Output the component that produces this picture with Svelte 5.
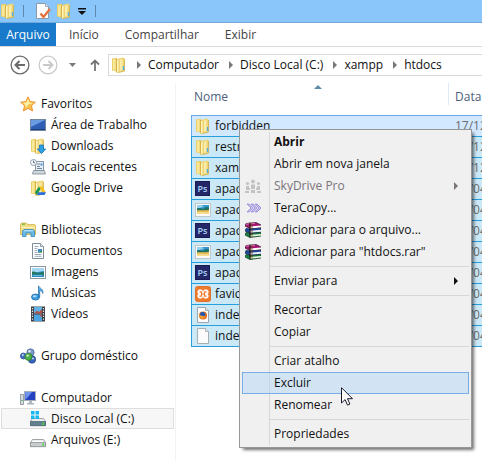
<script>
  const tabs = ['Início', 'Compartilhar', 'Exibir'];
  const crumbs = ['Computador', 'Disco Local (C:)', 'xampp', 'htdocs'];
  const groups = [
    {
      label: 'Favoritos', icon: 'star',
      items: [
        { label: 'Área de Trabalho', icon: 'desktop' },
        { label: 'Downloads', icon: 'downloads' },
        { label: 'Locais recentes', icon: 'recent' },
        { label: 'Google Drive', icon: 'gdrive' }
      ]
    },
    {
      label: 'Bibliotecas', icon: 'library',
      items: [
        { label: 'Documentos', icon: 'document' },
        { label: 'Imagens', icon: 'picture' },
        { label: 'Músicas', icon: 'music' },
        { label: 'Vídeos', icon: 'video' }
      ]
    },
    { label: 'Grupo doméstico', icon: 'homegroup', items: [] },
    {
      label: 'Computador', icon: 'computer',
      items: [
        { label: 'Disco Local (C:)', icon: 'driveC', selected: true },
        { label: 'Arquivos (E:)', icon: 'drive' }
      ]
    }
  ];
  const files = [
    { name: 'forbidden', icon: 'folder', date: '17/12' },
    { name: 'restricted', icon: 'folder', date: '17/12' },
    { name: 'xampp', icon: 'folder', date: '17/12' },
    { name: 'apache_pb.gif', icon: 'ps', date: '17/04' },
    { name: 'apache_pb.png', icon: 'photo', date: '17/04' },
    { name: 'apache_pb2.gif', icon: 'ps', date: '17/04' },
    { name: 'apache_pb2.png', icon: 'photo', date: '17/04' },
    { name: 'apache_pb2_ani.gif', icon: 'ps', date: '17/04' },
    { name: 'favicon.ico', icon: 'xampp', date: '17/04' },
    { name: 'index.html', icon: 'firefox', date: '17/04' },
    { name: 'index.php', icon: 'blank', date: '17/04' }
  ];
  const menu = [
    [
      { label: 'Abrir', bold: true },
      { label: 'Abrir em nova janela' },
      { label: 'SkyDrive Pro', icon: 'skydrive', disabled: true, sub: true },
      { label: 'TeraCopy...', icon: 'teracopy' },
      { label: 'Adicionar para o arquivo...', icon: 'rar' },
      { label: 'Adicionar para "htdocs.rar"', icon: 'rar' }
    ],
    [{ label: 'Enviar para', sub: true }],
    [{ label: 'Recortar' }, { label: 'Copiar' }],
    [{ label: 'Criar atalho' }, { label: 'Excluir', active: true }, { label: 'Renomear' }],
    [{ label: 'Propriedades' }]
  ];
</script>

{#snippet folderShape()}
  <path d="M1 1.500L6 .8v13.700L1 13.500z" fill="#eccf66" />
  <path d="M2 2.500l2.500-.5v11.500L2 13z" fill="#f8e89c" />
  <path d="M5 2h3v12.500L6.500 16 5 15z" fill="#d9b345" />
  <path d="M6 3l2-1v12.500l-2 1z" fill="#fdf3bd" />
  <path d="M7.500 1.500l5-1 1 1v12.300l-6 1.700z" fill="#efd473" />
  <path d="M9 2.500l2.500-.5v11L9 14z" fill="#f9ebaa" />
  <path d="M13.500 2v12l-6 1.500" fill="none" stroke="#d2ac42" stroke-width=".8" />
  <path d="M12.500 9v4" stroke="#56aee0" stroke-width="1.400" />
{/snippet}

{#snippet icon(name)}
  <svg class="icon" viewBox="0 0 16 16" width="16" height="16" aria-hidden="true">
    {#if name === 'folder'}
      {@render folderShape()}
    {:else if name === 'star'}
      <path d="M8 .8l2.200 4.800 5.200.6-3.900 3.500 1.100 5.300L8 12.400 3.400 15l1.100-5.300L.6 6.200l5.200-.6z" fill="#fbc04b" stroke="#e98f2c" stroke-width=".9" />
      <path d="M8 2.800l1.500 3.700 3.800.5-4.800 1.400-3.200 4 .5-3.100L2.600 7l3.700-.5z" fill="#fff0a8" />
    {:else if name === 'desktop'}
      <rect x=".5" y="2.500" width="15" height="11" fill="#2e5fb5" stroke="#71879f" />
      <path d="M1 3h14L1 10z" fill="#6b9be0" />
      <path d="M1 12.500h14" stroke="#1f3f7a" />
    {:else if name === 'downloads'}
      {@render folderShape()}
      <path d="M9.500 7h4v4h2.200L11.500 15.600 7.300 11h2.200z" fill="#2f9fe3" stroke="#1673b4" stroke-width=".8" />
    {:else if name === 'recent'}
      <rect x="5.500" y="2.500" width="8" height="9" fill="#e7edf3" stroke="#8797a8" />
      <path d="M7 5h3M7 7.500h3M7 9.500h5" stroke="#72869b" />
      <rect x="10.500" y="4.500" width="2" height="2" fill="#4398d8" />
      <path d="M3.500 11.500h11l1 3.500h-13z" fill="#ced6dd" stroke="#7d8994" stroke-width=".8" />
      <circle cx="3.500" cy="3.500" r="3" fill="#f6f8fa" stroke="#8797a8" stroke-width=".9" />
      <path d="M3.500 1.700v2h1.500" stroke="#44566b" stroke-width=".8" fill="none" />
    {:else if name === 'gdrive'}
      {@render folderShape()}
      <path d="M9 6.500h3l4 6h-3.200z" fill="#fbc118" />
      <path d="M9 6.500l1.600 2.600L6.700 15 5 12.300z" fill="#159a50" />
      <path d="M8.300 12.300H16L14.500 15H6.700z" fill="#2c6edb" />
    {:else if name === 'library'}
      <path d="M.5 3l1-2h5l1 1.500h7l1 1v9H.5z" fill="#f4dc82" stroke="#d3b04d" stroke-width=".8" />
      <path d="M2 2.200h3" stroke="#5bbd45" stroke-width="1.200" />
      <path d="M1 5.500h14" stroke="#fff5c4" />
      <path d="M2.500 14.500V9l1.500-1.500h9L14.500 9v5.500H11V11H6v3.500z" fill="#69b9e8" stroke="#3486ba" stroke-width=".8" />
      <path d="M4 8.700h9" stroke="#c2e8fb" />
    {:else if name === 'document'}
      <path d="M2.500.5h8l3 3v12h-11z" fill="#fff" stroke="#7e8a96" />
      <path d="M10.500.5v3h3" fill="#dce3ea" stroke="#7e8a96" stroke-width=".8" />
      <path d="M4.500 3.500h4M4.500 5.500h3M4.500 7.500h3M4.500 9.500h3M4.500 11.500h7M4.500 13.300h7" stroke="#8fa3b7" stroke-width=".9" />
      <rect x="8" y="6" width="4" height="3.500" fill="#3a8ac7" /><path d="M8 9.500l4-2v2z" fill="#3f9346" />
    {:else if name === 'picture'}
      <rect x=".5" y="2.500" width="15" height="12" fill="#fff" stroke="#8b969f" />
      <rect x="2" y="4" width="12" height="9" fill="#2a8ac0" />
      <path d="M2 4h12v3L2 9z" fill="#a4d8f5" />
      <path d="M2 8c2.500-1.500 4 1 6 1s4-1.500 6-1v2.500H2z" fill="#24765c" />
      <path d="M3 11.500h9" stroke="#7cc4e6" stroke-width=".8" />
    {:else if name === 'music'}
      <ellipse cx="5.500" cy="12" rx="4" ry="3" fill="#3d9de0" stroke="#1e6ba8" stroke-width=".8" />
      <path d="M8.500 12V.8c1 2.700 5.500 3.200 4.200 7.700 0-1.900-1-2.800-3-3V12z" fill="#56b2ec" stroke="#1e6ba8" stroke-width=".7" />
      <ellipse cx="4.700" cy="11.300" rx="2" ry="1" fill="#a9dbf9" />
    {:else if name === 'video'}
      <rect x="1" y=".5" width="14" height="15" fill="#3a3f45" />
      <rect x="4" y="1" width="8" height="6.500" fill="#61b3e8" /><rect x="4" y="8.500" width="8" height="6.500" fill="#49a4e2" />
      <path d="M4 7.500l3-3 2 1.500 3-3v4.500zM9 8.500h3v3z" fill="#b55243" />
      <path d="M2.500 2v13M13.500 2v13" stroke="#e4e8eb" stroke-width="1.200" stroke-dasharray="1.300 1.300" />
    {:else if name === 'homegroup'}
      <circle cx="10.500" cy="4.500" r="3.700" fill="#7c98c8" stroke="#455f98" stroke-width=".7" />
      <circle cx="3.400" cy="8" r="3" fill="#406fc0" stroke="#294c8e" stroke-width=".7" />
      <circle cx="12" cy="11.500" r="3.700" fill="#3564bd" stroke="#203f86" stroke-width=".7" />
      <circle cx="8.500" cy="8.800" r="3.600" fill="#4fae43" stroke="#2a7d2b" stroke-width=".7" />
      <g fill="#fff" opacity=".75"><circle cx="9.500" cy="3.300" r="1.200" /><circle cx="2.800" cy="7" r="1" /><circle cx="7.600" cy="7.600" r="1.200" /><circle cx="13" cy="10.500" r="1" /></g>
    {:else if name === 'computer'}
      <rect x=".5" y="4.500" width="3" height="10" fill="#d5dadf" stroke="#868f98" stroke-width=".8" />
      <path d="M1.300 10.500h1.400" stroke="#45b83c" />
      <rect x="4.500" y="1.500" width="11" height="9" fill="#2341c0" stroke="#a7b0ba" />
      <path d="M5 2h7L5.500 10z" fill="#6f95ee" />
      <path d="M9 11h3v2h2v1.500H7V13h2z" fill="#aeb6be" />
    {:else if name === 'driveC' || name === 'drive'}
      <path d="M2.500 7.500h11l2 3v4H.5v-4z" fill="#eceeef" stroke="#8b9095" stroke-width=".8" />
      {#if name === 'driveC'}
        <path d="M.5 10.500h15v4.200H.5z" fill="#61818f" stroke="#47606c" stroke-width=".7" />
        <path d="M1 0h3.500v3.500H1zM5.500 0H9v3.500H5.500zM1 4.500h3.500V8H1zM5.500 4.500H9V8H5.500z" fill="#17b7ef" />
      {:else}
        <path d="M.5 10.500h15v4.200H.5z" fill="#c9cccf" stroke="#85898d" stroke-width=".7" />
        <path d="M2 9.500h11" stroke="#fff" />
      {/if}
      <rect x="12.500" y="11.500" width="1.500" height="2.500" fill="#46dd38" />
    {:else if name === 'ps'}
      <rect x=".5" y=".5" width="14" height="14" fill="#232768" stroke="#1a1c55" />
      <text x="2.500" y="10.500" font-size="9" font-weight="600" fill="#a9d3fa">Ps</text>
    {:else if name === 'photo'}
      <rect x=".5" y="1.500" width="15" height="13" fill="#fbfaf6" stroke="#b9bcbc" stroke-width=".8" />
      <rect x="2" y="3" width="12" height="9" fill="#2f97cf" />
      <path d="M2 3h5l2 1.500L5 6H2z" fill="#8fd0ef" />
      <path d="M2 6.500l3-.5 3 1 3-2 3 .5v3H2z" fill="#23705f" />
      <path d="M2 8.500c3-1 8 .5 12-.7V12H2z" fill="#e9bc4c" />
      <path d="M2 10.500c4-1 8 0 12-.5v2H2z" fill="#f6dc90" />
    {:else if name === 'xampp'}
      <rect x=".5" y=".5" width="15" height="15" rx="2" fill="#ee7a2b" stroke="#dc6518" stroke-width=".8" />
      <path d="M4 3.500h2.500L8 5l1.500-1.500H12l1.500 1.500v2L12.500 8l1 1v2L12 12.500H9.500L8 11l-1.500 1.500H4L2.500 11V9l1-1-1-1V5z" fill="#fff" />
      <path d="M4.500 5.800h2v2.200h3V5.800h2M4.500 10.200h2V8M9.500 8v2.200h2" fill="none" stroke="#ee7a2b" stroke-width="1.200" />
    {:else if name === 'firefox'}
      <path d="M2.500.5h8l3 3v12h-11z" fill="#fbfbfb" stroke="#979da1" stroke-width=".9" />
      <path d="M10.500.5v3h3" fill="#e6e9eb" stroke="#979da1" stroke-width=".8" />
      <circle cx="8" cy="8.500" r="4" fill="#e46d20" /><circle cx="7.600" cy="7.600" r="2.700" fill="#2756ae" />
      <path d="M4 6.500c.5 2 2 2 3 2.300s2 .6 3-.3c0 2-1.500 3.300-3 3.200S4 9.500 4 6.500z" fill="#f29b2d" />
    {:else if name === 'blank'}
      <path d="M2.500.5h8l3 3v12h-11z" fill="#fbfbfb" stroke="#a2a7aa" stroke-width=".9" />
      <path d="M10.500.5v3h3" fill="#e9ecee" stroke="#a2a7aa" stroke-width=".8" />
    {:else if name === 'skydrive'}
      <g fill="#c3c3c3">
        <circle cx="8" cy="3.500" r="2" /><circle cx="2.500" cy="5.500" r="1.600" /><circle cx="13.500" cy="5.500" r="1.600" />
        <path d="M6 6.500h4V11H6zM1 8h3v2h1v2H1zM12 8h3v4h-4v-2h1z" />
        <path d="M0 13h4v2H0zM6 12h4v3H6zM12 13h4v2h-4z" />
      </g>
    {:else if name === 'teracopy'}
      <path d="M2 4h2.200l4 4-4 4H2l4-4zM6 4h2.200l4 4-4 4H6l4-4zM10 4h2.200l4 4-4 4H10l4-4z" fill="#c5bdf2" stroke="#8d80d6" stroke-width=".7" />
    {:else if name === 'rar'}
      <path d="M1 1.500L11 .5l5 2.500v2.500L5 6.500 0 4z" fill="#a51773" stroke="#2b1023" stroke-width=".7" />
      <path d="M5 4.500l11-1v2l-11 1z" fill="#fff" /><path d="M1 2.200l9-1" stroke="#eb79c8" />
      <path d="M1 6.500L5 7l11-1v4l-11 1.500-5-2.500z" fill="#1c49a8" stroke="#111c40" stroke-width=".7" />
      <path d="M5 8.700l11-1v2l-11 1z" fill="#e9eef8" />
      <path d="M1 10.500l4 1.200 11-1.200v3.500L5 15.500 0 13z" fill="#168a43" stroke="#0b3018" stroke-width=".7" />
      <path d="M5 13l11-1v1.500L5 14.700z" fill="#effae9" />
      <path d="M5 .8v14.500" stroke="#251811" stroke-width="1.300" /><path d="M7 .8v14.200" stroke="#7a4a22" stroke-width=".8" />
    {:else if name === 'properties'}
      <path d="M1.500.5h9l3 3v12h-12z" fill="#fdfdfd" stroke="#8c9aa8" />
      <path d="M10.500.5v3h3" fill="#dfe6ec" stroke="#8c9aa8" stroke-width=".8" />
      <path d="M5.500 10.500l3 3.500L15 6" fill="none" stroke="#e5713d" stroke-width="2.400" />
    {/if}
  </svg>
{/snippet}

{#snippet arrow()}
  <svg class="arrow" viewBox="0 0 4 8" width="4" height="8" aria-hidden="true"><path d="M0 0l4 4-4 4z" fill="currentColor" /></svg>
{/snippet}

<div class="window">
  <header class="title">
    {@render icon('folder')}
    <span class="bar"></span>
    <button class="plain" aria-label="Propriedades">{@render icon('properties')}</button>
    <button class="plain" aria-label="Nova pasta">{@render icon('folder')}</button>
    <button class="plain" aria-label="Personalizar">
      <svg viewBox="0 0 8 7" width="8" height="7"><path d="M0 0h8v1.500H0zM0 3h8L4 7z" fill="#111" /></svg>
    </button>
    <span class="bar"></span>
  </header>

  <div class="tabs">
    <button class="tab file">Arquivo</button>
    {#each tabs as tab}<button class="tab">{tab}</button>{/each}
  </div>

  <div class="nav">
    <button class="plain" aria-label="Voltar">
      <svg viewBox="0 0 20 20" width="20" height="20" fill="none" stroke="#6b6b6b">
        <circle cx="10" cy="10" r="8.900" stroke-width="1.300" /><path d="M15 10H6M9.500 6L5.500 10l4 4" stroke-width="2" />
      </svg>
    </button>
    <button class="plain" aria-label="Avançar">
      <svg viewBox="0 0 20 20" width="20" height="20" fill="none" stroke="#c9c9c9">
        <circle cx="10" cy="10" r="8.900" stroke-width="1.200" /><path d="M5 10h9M10.500 6l4 4-4 4" stroke-width="2" />
      </svg>
    </button>
    <button class="plain history" aria-label="Locais recentes">
      <svg viewBox="0 0 7 4" width="7" height="4"><path d="M0 0h7L3.500 4z" fill="#7a7a7a" /></svg>
    </button>
    <button class="plain up" aria-label="Acima">
      <svg viewBox="0 0 10 12" width="10" height="12" fill="none" stroke="#757575" stroke-width="1.800"><path d="M5 12V1.500M1 5.500l4-4 4 4" /></svg>
    </button>
    <div class="address">
      {@render icon('folder')}
      {#each crumbs as crumb}
        {@render arrow()}
        <a href="#{crumb}">{crumb}</a>
      {/each}
    </div>
  </div>

  <div class="body">
    <nav class="side">
      {#each groups as group}
        <div class="group">
          <a class="place" href="#{group.label}">{@render icon(group.icon)}{group.label}</a>
          {#each group.items as item}
            <a class="place child" class:selected={item.selected} href="#{item.label}">{@render icon(item.icon)}{item.label}</a>
          {/each}
        </div>
      {/each}
    </nav>

    <main>
      <table>
        <thead>
          <tr>
            <th class="name">
              <span class="head">Nome</span>
              <svg class="sort" viewBox="0 0 8 4" width="8" height="4" aria-hidden="true"><path d="M0 4l4-4 4 4z" fill="#5f8cab" /></svg>
            </th>
            <th class="date"><span class="head">Data</span></th>
          </tr>
        </thead>
        <tbody>
          {#each files as file}
            <tr>
              <td><div class="cell">{@render icon(file.icon)}{file.name}</div></td>
              <td class="date">{file.date}</td>
            </tr>
          {/each}
        </tbody>
      </table>
    </main>
  </div>

  <div class="menu" role="menu">
    {#each menu as section}
      <div class="section">
        {#each section as item}
          <button class="item" role="menuitem" class:bold={item.bold} class:active={item.active} disabled={item.disabled}>
            <span class="slot">{#if item.icon}{@render icon(item.icon)}{/if}</span>
            <span class="label">{item.label}</span>
            {#if item.sub}{@render arrow()}{/if}
          </button>
        {/each}
      </div>
    {/each}
  </div>

  <svg class="cursor" viewBox="0 0 12 19" width="12" height="19" aria-hidden="true">
    <path d="M.5.700v15.300l3.600-3.400 2.400 5.500 2.400-1-2.400-5.400h5z" fill="#fff" stroke="#1b1b2b" />
  </svg>
</div>

<style>
  :global(body) { margin: 0; background: #fff; }
  .window {
    position: relative;
    display: flex;
    flex-direction: column;
    min-height: 100vh;
    overflow: hidden;
    font: 12px/16px "Open Sans", "Noto Sans", sans-serif;
    color: #111;
  }
  button { font: inherit; color: inherit; background: none; border: 0; padding: 0; margin: 0; }
  a { color: inherit; text-decoration: none; }
  svg { display: block; flex: none; }
  .plain { display: flex; }

  .title { display: flex; align-items: center; height: 22px; background: #8bc6fa; border-bottom: 1px solid #74a9dc; }
  .bar { width: 1px; height: 12px; background: #5d87ad; margin: 0 11px 0 7px; }
  .title .plain { margin-right: 5px; }
  .title .plain + .plain + .plain { margin: 0 2px 0 1px; }

  .tabs { display: flex; height: 23px; border-bottom: 1px solid #d9dadc; }
  .tab { padding: 0 13px; color: #444; }
  .tab.file { width: 56px; padding: 0; color: #fff; background: #1979ca; }

  .nav { display: flex; align-items: center; height: 36px; padding-left: 10px; }
  .nav .plain + .plain { margin-left: 8px; }
  .nav .plain.history { margin-left: 11px; }
  .nav .plain.up { margin-left: 14px; }
  .address {
    display: flex;
    flex: 1;
    align-items: center;
    box-sizing: border-box;
    height: 22px;
    margin-left: 8px;
    padding-left: 2px;
    border: 1px solid #d9d9d9;
    border-right: 0;
    white-space: nowrap;
  }
  .address .arrow { color: #777; margin: 0 7px 0 10px; }

  .body { display: flex; flex: 1; }
  .side { flex: none; box-sizing: border-box; width: 176px; padding: 10px 1px 0; border-right: 1px solid #f3f3f3; }
  .group { margin-bottom: 21px; }
  .place { display: flex; align-items: center; gap: 5px; box-sizing: border-box; height: 21px; padding-left: 19px; }
  .place.child { padding-left: 29px; }
  .place.selected { padding-left: 28px; background: #f7f7f7; border: 1px solid #dedede; }

  main { flex: 1; min-width: 0; padding-left: 15px; }
  table { width: 100%; table-layout: fixed; border-spacing: 0; }
  th { position: relative; height: 32px; padding: 0 0 0 3px; text-align: left; vertical-align: top; font-weight: 400; color: #4c607a; }
  th.name { width: 254px; }
  .head { display: block; padding-top: 6px; }
  th.date { padding: 0; overflow: hidden; }
  th.date .head { height: 16px; padding-left: 6px; border-left: 1px solid #dfeaf7; }
  .sort { position: absolute; top: 2px; left: 123px; }
  td { height: 20px; padding: 0; border-top: 1px solid #26a0da; background: #cbe8f6; white-space: nowrap; overflow: hidden; }
  td:first-child { border-left: 1px solid #26a0da; }
  td.date { padding-left: 7px; color: #6d6d6d; }
  tr:first-child td { background: #d1e8ff; border-color: #66a7e8; }
  tr:last-child td { border-bottom: 1px solid #26a0da; }
  .cell { display: flex; align-items: center; gap: 4px; padding-left: 3px; }

  .menu {
    position: absolute;
    top: 129px;
    left: 239px;
    box-sizing: border-box;
    width: 233px;
    padding: 1px 2px 2px;
    background: linear-gradient(#d7d7d7, #d7d7d7) 29px 2px / 1px calc(100% - 4px) no-repeat #f0f0f0;
    border: 1px solid #979797;
    box-shadow: 3px 3px 3px -1px rgba(0, 0, 0, .55);
  }
  .section + .section::before { content: ""; display: block; height: 1px; margin: 3px 0 3px 28px; background: #d7d7d7; }
  .item { display: flex; align-items: center; box-sizing: border-box; width: 100%; height: 22px; padding-right: 10px; border: 1px solid transparent; text-align: left; }
  .slot { width: 31px; padding-left: 2px; box-sizing: border-box; }
  .label { flex: 1; white-space: nowrap; }
  .item:disabled { color: #7a747a; }
  .bold { font-weight: 700; }
  .active { background: rgba(180, 215, 245, .5); border-color: #78aee5; }
  .cursor { position: absolute; top: 387px; left: 341px; }
</style>
